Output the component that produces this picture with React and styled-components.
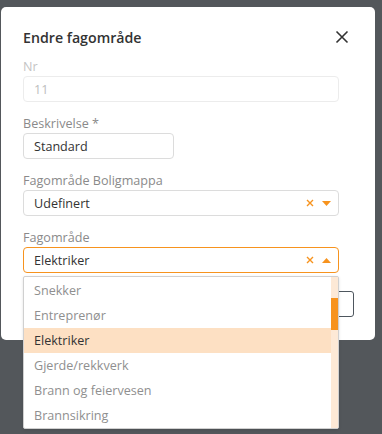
import React from "react";
import styled, { createGlobalStyle } from "styled-components";

const GlobalStyle = createGlobalStyle`
  html, body {
    margin: 0;
    padding: 0;
    background: #53575b;
    font-family: "Open Sans", "Liberation Sans", sans-serif;
  }
  body {
    width: 382px;
    height: 434px;
    overflow: hidden;
  }
`;

const orange = "#f7931e";

const Modal = styled.div`
  margin: 7px 0 0 1px;
  width: 374px;
  box-sizing: border-box;
  padding: 18px 21px 23px 22px;
  background: #fff;
  border-radius: 5px;
`;

const Header = styled.div`
  display: flex;
  align-items: center;
  justify-content: space-between;
  height: 24px;
  margin-bottom: 9px;
`;

const Title = styled.h2`
  margin: 0;
  font-size: 14.2px;
  font-weight: 600;
  color: #333;
`;

const Close = styled.button`
  border: 0;
  background: none;
  padding: 0;
  margin-right: 5px;
  width: 14px;
  height: 14px;
  display: flex;
  cursor: pointer;
`;

const Form = styled.div`
  display: flex;
  flex-direction: column;
  gap: 13px;
  width: 316px;
`;

const Field = styled.div`
  position: relative;
  display: flex;
  flex-direction: column;
`;

const Label = styled.label`
  font-size: 12.6px;
  line-height: 18px;
  color: ${p => (p.disabled ? "#c4c4c4" : "#8a8a8a")};
`;

const Input = styled.div`
  box-sizing: border-box;
  height: 26px;
  width: ${p => p.width || "100%"};
  border: 1px solid ${p => (p.focused ? orange : p.disabled ? "#ececec" : "#dcdcdc")};
  border-radius: 4px;
  padding: 0 10px;
  display: flex;
  align-items: center;
  font-size: 12.6px;
  color: ${p => (p.disabled ? "#bdbdbd" : "#333")};
`;

const Value = styled.span`
  flex: 1;
`;

const Icons = styled.span`
  display: flex;
  align-items: center;
  gap: 8px;
  margin-right: -3px;
`;

const Footer = styled.div`
  display: flex;
  justify-content: flex-end;
  margin-top: 18px;
`;

const Button = styled.button`
  height: 26px;
  width: 90px;
  border: 1px solid #4e565e;
  border-radius: 3px;
  background: #fff;
  color: #4e565e;
  font-family: inherit;
  font-size: 12.6px;
`;

const Menu = styled.div`
  position: absolute;
  top: 47px;
  left: 0;
  width: 316px;
  box-sizing: border-box;
  border: 1px solid #d0d0d0;
  border-radius: 2px;
  background: #fff;
  box-shadow: 0 1px 3px rgba(0, 0, 0, 0.12);
  display: flex;
  z-index: 10;
`;

const List = styled.div`
  flex: 1;
  padding-top: 1px;
`;

const Option = styled.div`
  height: 25px;
  display: flex;
  align-items: center;
  padding-left: 10px;
  font-size: 12.6px;
  color: ${p => (p.active ? "#333" : "#8f8f8f")};
  background: ${p => (p.active ? "#fde0c3" : "transparent")};
`;

const Track = styled.div`
  width: 7px;
  background: #fde9d6;
  padding-top: 21px;
`;

const Thumb = styled.div`
  height: 32px;
  background: ${orange};
`;

const ClearIcon = () => (
  <svg width="8" height="8" viewBox="0 0 8 8">
    <path d="M1 1L7 7M7 1L1 7" stroke={orange} strokeWidth="1.4" />
  </svg>
);

const Caret = ({ up }) => (
  <svg width="9" height="5" viewBox="0 0 9 5">
    <path d={up ? "M0 5L4.5 0L9 5Z" : "M0 0L4.5 5L9 0Z"} fill={orange} />
  </svg>
);

const options = [
  "Snekker",
  "Entreprenør",
  "Elektriker",
  "Gjerde/rekkverk",
  "Brann og feiervesen",
  "Brannsikring"
];

export default function App() {
  return (
    <>
      <GlobalStyle />
      <Modal>
        <Header>
          <Title>Endre fagområde</Title>
          <Close aria-label="Lukk">
            <svg width="14" height="14" viewBox="0 0 14 14">
              <path d="M1.5 1.5L12.5 12.5M12.5 1.5L1.5 12.5" stroke="#333" strokeWidth="1.6" />
            </svg>
          </Close>
        </Header>
        <Form>
          <Field>
            <Label disabled>Nr</Label>
            <Input disabled>11</Input>
          </Field>
          <Field>
            <Label>Beskrivelse *</Label>
            <Input width="151px">Standard</Input>
          </Field>
          <Field>
            <Label>Fagområde Boligmappa</Label>
            <Input>
              <Value>Udefinert</Value>
              <Icons>
                <ClearIcon />
                <Caret />
              </Icons>
            </Input>
          </Field>
          <Field>
            <Label>Fagområde</Label>
            <Input focused>
              <Value>Elektriker</Value>
              <Icons>
                <ClearIcon />
                <Caret up />
              </Icons>
            </Input>
            <Menu>
              <List>
                {options.map(o => (
                  <Option key={o} active={o === "Elektriker"}>
                    {o}
                  </Option>
                ))}
              </List>
              <Track>
                <Thumb />
              </Track>
            </Menu>
          </Field>
        </Form>
        <Footer>
          <Button>Lagre</Button>
        </Footer>
      </Modal>
    </>
  );
}
